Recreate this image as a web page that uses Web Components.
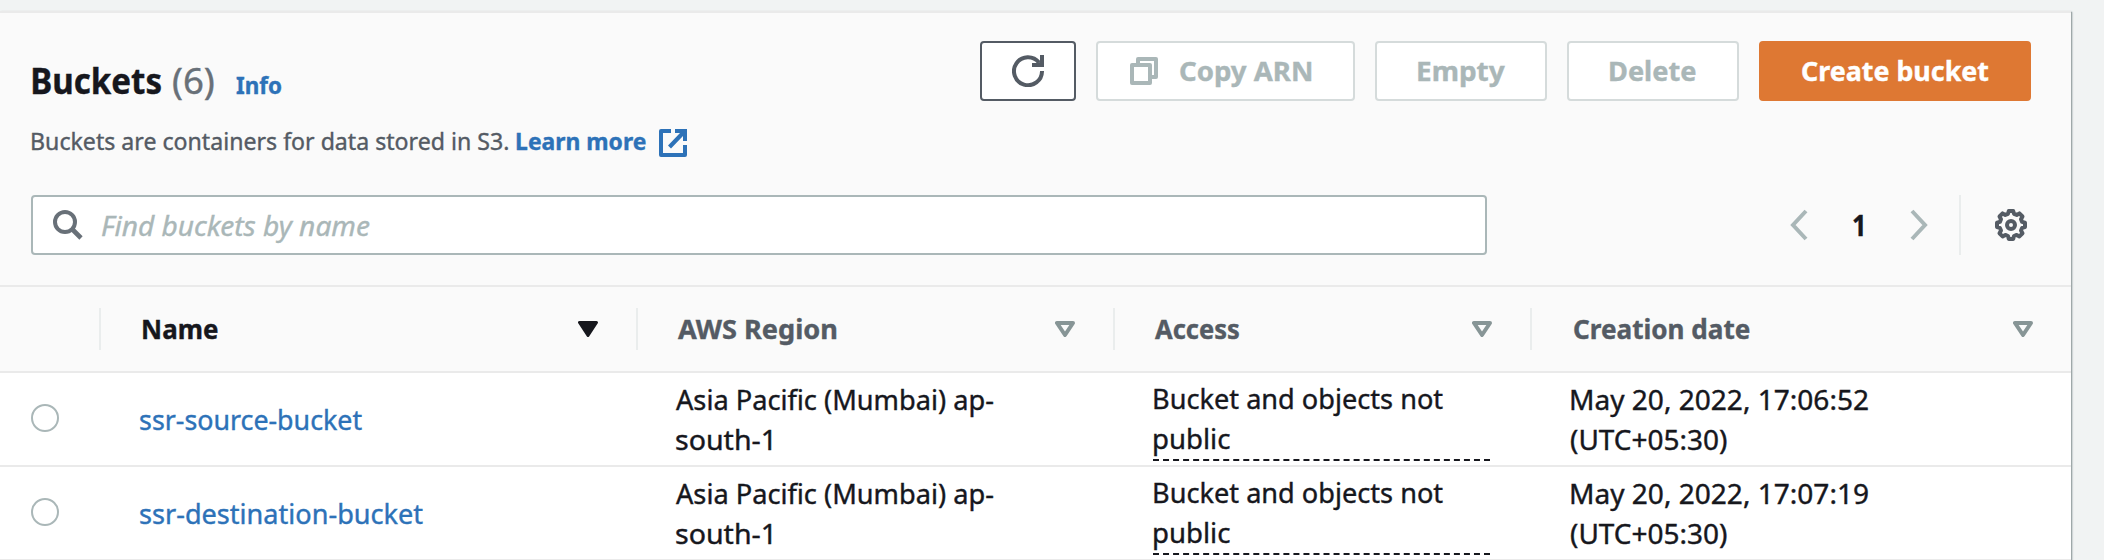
<!DOCTYPE html>
<html lang="en">
<head>
<meta charset="utf-8">
<title>Buckets</title>
<style>
html,body{margin:0;height:560px;overflow:hidden;background:#f1f3f3}
body{display:flow-root;font-family:"Noto Sans","Open Sans",sans-serif;color:#16171d;-webkit-text-stroke:.4px}
</style>
</head>
<body>
<bucket-panel></bucket-panel>
<script>
const ctx = document.createElement('canvas').getContext('2d');
const define = (name, html, setup) => {
  const t = document.createElement('template');
  t.innerHTML = html;
  customElements.define(name, class extends HTMLElement {
    connectedCallback() {
      if (this.shadowRoot) return;
      this.attachShadow({mode: 'open'}).append(t.content.cloneNode(true));
      if (setup) setup(this, this.shadowRoot);
    }
  });
};

/* One line of text condensed or widened to the width in its w attribute. */
define('ink-text', `<style>
:host{display:inline-block;white-space:nowrap}
span{display:inline-block;transform-origin:0 50%}
</style><span><slot></slot></span>`, (host, root) => {
  const cs = getComputedStyle(host), w = +host.getAttribute('w');
  ctx.font = `${cs.fontStyle} ${cs.fontWeight} ${cs.fontSize} ${cs.fontFamily}`;
  const m = ctx.measureText(host.textContent);
  const k = w / (m.actualBoundingBoxLeft + m.actualBoundingBoxRight);
  host.style.width = w + 'px';
  root.querySelector('span').style.transform = `scaleX(${k}) translateX(${m.actualBoundingBoxLeft}px)`;
});

const icons = {
  refresh: [32, 32, `<path d="M30 16A14 14 0 1 1 27 7.500" fill="none" stroke="currentColor" stroke-width="4"/><path d="M28 0h4v12H20V8h4L28 7z" fill="currentColor"/>`],
  copy: [28, 28, `<path d="M8 6V2h18v18h-4" fill="none" stroke="currentColor" stroke-width="4" stroke-linejoin="round"/><rect x="2" y="8" width="18" height="18" fill="none" stroke="currentColor" stroke-width="4" stroke-linejoin="round"/>`],
  external: [28, 28, `<path d="M12 2H2v24h24V16" fill="none" stroke="currentColor" stroke-width="4" stroke-linejoin="round"/><path d="M16 0h12v12h-4V7L12 19.500 9 16.500 21 4h-5z" fill="currentColor"/>`],
  search: [30, 30, `<circle cx="12" cy="12" r="10" fill="none" stroke="currentColor" stroke-width="4"/><path d="M19 19l9 9" stroke="currentColor" stroke-width="4.600"/>`],
  prev: [18, 32, `<path d="M16 2L3 16l13 14" fill="none" stroke="currentColor" stroke-width="4"/>`],
  next: [18, 32, `<path d="M2 2l13 14L2 30" fill="none" stroke="currentColor" stroke-width="4"/>`],
  gear: [32, 32, `<path d="M13.800 2h4.400l.8 2.800 2.700 1.100 2.700-1.500 3.100 3.100-1.500 2.700 1.100 2.700 2.900.8v4.400l-2.900.8-1.100 2.700 1.500 2.700-3.100 3.100-2.700-1.500-2.700 1.100-.8 2.900h-4.400l-.8-2.900-2.700-1.100-2.700 1.500-3.100-3.100 1.500-2.700-1.100-2.700-2.900-.8v-4.400l2.900-.8 1.100-2.700-1.500-2.700 3.100-3.100 2.700 1.500 2.700-1.100z" fill="none" stroke="currentColor" stroke-width="4" stroke-linejoin="round"/><circle cx="16" cy="16" r="4" fill="none" stroke="currentColor" stroke-width="4"/>`],
  sort: [20, 16, `<path d="M2 2h16L10 14z" fill="none" stroke="currentColor" stroke-width="4" stroke-linejoin="round"/>`],
  sorted: [20, 16, `<path d="M1.500 1.500h17L10 14.500z" fill="currentColor" stroke="currentColor" stroke-width="3" stroke-linejoin="round"/>`]
};
define('ui-icon', `<style>:host{display:block;flex:none}svg{display:block}</style>`, (host, root) => {
  const [w, h, body] = icons[host.getAttribute('name')];
  root.innerHTML += `<svg width="${w}" height="${h}" viewBox="0 0 ${w} ${h}">${body}</svg>`;
});

define('ui-button', `<style>
:host{display:flex;align-items:center;justify-content:center;box-sizing:border-box;height:60px;flex:none;border:2px solid #d5dbdb;border-radius:4px;background:#fff;color:#aab7b8;font-weight:700;font-size:27.500px;line-height:56px}
:host([kind=normal]){border-color:#545b64;color:#545b64}
:host([kind=primary]){border-color:#de7833;background:#de7833;color:#fff}
::slotted(ui-icon[name=copy]){margin-right:22px}
</style><slot></slot>`);

define('panel-header', `<style>
:host{display:flex;justify-content:space-between;box-sizing:border-box;height:154px;padding:28px 40px 0 32px}
.title{display:flex;align-items:baseline;height:50px;margin-top:15px;line-height:50px}
.title b{font-size:36px;margin-left:1px}.title .n{font-size:36px;color:#687078;margin-left:12px}
.link{color:#2d72b8;font-weight:700;font-size:24px}
.title .link{margin-left:22px}
.desc{display:flex;align-items:center;font-size:24px;line-height:32px;color:#545b64;margin-top:19px}
.desc .link{margin:0 13px 0 9px}
.desc ui-icon{color:#2d72b8;margin-top:3px}
.actions{display:flex;gap:20px}
</style>
<div><div class="title"><b><ink-text w="128">Buckets</ink-text></b><span class="n"><ink-text w="41">(6)</ink-text></span><span class="link"><ink-text w="45">Info</ink-text></span></div>
<div class="desc"><ink-text w="476">Buckets are containers for data stored in S3.</ink-text><span class="link"><ink-text w="129">Learn more</ink-text></span><ui-icon name="external"></ui-icon></div></div>
<div class="actions">
<ui-button kind="normal" style="width:96px"><ui-icon name="refresh"></ui-icon></ui-button>
<ui-button style="width:259px;padding-right:11px"><ui-icon name="copy"></ui-icon><ink-text w="131">Copy ARN</ink-text></ui-button>
<ui-button style="width:172px"><ink-text w="87">Empty</ink-text></ui-button>
<ui-button style="width:172px"><ink-text w="86">Delete</ink-text></ui-button>
<ui-button kind="primary" style="width:272px"><ink-text w="187">Create bucket</ink-text></ui-button>
</div>`);

define('filter-bar', `<style>
:host{display:flex;height:60px;padding:28px 44px 30px 31px;align-items:center}
.search{display:flex;align-items:center;box-sizing:border-box;width:1456px;height:60px;border:2px solid #aab7b8;border-radius:4px;background:#fff;padding-left:20px;font-style:italic;font-size:28px;line-height:56px;color:#aab7b8}
.search ui-icon{color:#687078;margin-right:19px}
.pager{display:flex;align-items:center;margin-left:auto;color:#aab7b8}
.pager b{color:#16171d;font-size:28px;line-height:56px;margin:0 47px 0 45px}
i{width:2px;height:60px;background:#eaeded;margin:0 34px 0 31px}
.pager ui-icon[name=gear]{color:#545b64}
</style>
<div class="search"><ui-icon name="search"></ui-icon><ink-text w="268">Find buckets by name</ink-text></div>
<div class="pager"><ui-icon name="prev"></ui-icon><b><ink-text w="10">1</ink-text></b><ui-icon name="next"></ui-icon><i></i><ui-icon name="gear"></ui-icon></div>`);

define('head-cell', `<style>
:host{display:flex;align-items:center;justify-content:space-between;box-sizing:border-box;height:42px;border-left:2px solid #eaeded;padding:0 38px 0 40px;font-weight:700;font-size:27.500px;line-height:40px;color:#545b64}
:host([sorted]){color:#16171d;padding-left:42px}
:host(:last-of-type){padding-left:42px}
::slotted(ui-icon[name=sort]){color:#879596}
</style><slot></slot>`);

define('table-head', `<style>
:host{display:grid;grid-template-columns:99px 537px 477px 417px 541px;align-items:center;height:84px;border-top:2px solid #eaeaea;border-bottom:2px solid #eaeaea}
</style><span></span>
<head-cell sorted><ink-text w="75">Name</ink-text><ui-icon name="sorted"></ui-icon></head-cell>
<head-cell><ink-text w="158">AWS Region</ink-text><ui-icon name="sort"></ui-icon></head-cell>
<head-cell><ink-text w="84">Access</ink-text><ui-icon name="sort"></ui-icon></head-cell>
<head-cell><ink-text w="176">Creation date</ink-text><ui-icon name="sort"></ui-icon></head-cell>`);

define('bucket-row', `<style>
:host{display:grid;grid-template-columns:140px 536px 477px 418px 500px;height:92px;border-bottom:2px solid #eaeaea;background:#fff;font-size:28px;line-height:40px}
.radio{box-sizing:border-box;width:28px;height:28px;border:2px solid #aab7b8;border-radius:50%;margin:31px 0 0 31px}
.name{color:#2d72b8;padding-top:26px}
.cell{padding-top:6px}
.access{box-sizing:border-box;width:337px;height:88px;padding:5px 0 0 1px;border-bottom:2px dashed #16171d}
</style><span class="radio"></span>
<div class="name"><slot name="name"></slot></div>
<div class="cell"><ink-text w="317">Asia Pacific (Mumbai) ap-</ink-text><br><ink-text w="95">south-1</ink-text></div>
<div class="access"><ink-text w="289">Bucket and objects not</ink-text><br><ink-text w="76">public</ink-text></div>
<div class="cell"><slot name="date"></slot><br><ink-text w="156">(UTC+05:30)</ink-text></div>`);

define('bucket-panel', `<style>
:host{display:block;box-sizing:border-box;width:2071px;height:549px;margin-top:11px;border-top:2px solid #eaeaea;background:#fafafa;box-shadow:1px 1px 1px 0 #9fa8a9,1px 1px 2px 0 #aab7b8;overflow:hidden}
</style>
<panel-header></panel-header><filter-bar></filter-bar><table-head></table-head>
<bucket-row><ink-text slot="name" w="222">ssr-source-bucket</ink-text><ink-text slot="date" w="297">May 20, 2022, 17:06:52</ink-text></bucket-row>
<bucket-row><ink-text slot="name" w="283">ssr-destination-bucket</ink-text><ink-text slot="date" w="297">May 20, 2022, 17:07:19</ink-text></bucket-row>`);
</script>
</body>
</html>
